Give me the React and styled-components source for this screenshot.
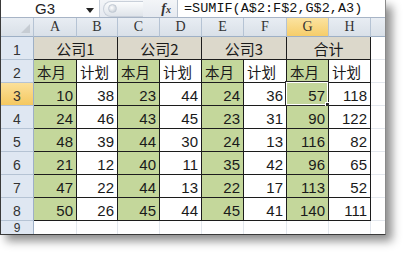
import React from "react";
import styled, { createGlobalStyle } from "styled-components";

const GlobalStyle = createGlobalStyle`
  html, body {
    margin: 0;
    padding: 0;
    background: #ffffff;
  }
`;

const Page = styled.div`
  width: 407px;
  height: 257px;
  overflow: hidden;
`;

const Window = styled.div`
  width: 384px;
  height: 234px;
  overflow: hidden;
  background: #ffffff;
  border-left: 1px solid #3a3a3a;
  border-right: 1px solid #8a8a8a;
  border-bottom: 1px solid #3a3a3a;
  box-shadow: 6px 6px 9px rgba(0, 0, 0, 0.45);
  display: flex;
  flex-direction: column;
`;

const FormulaBar = styled.div`
  display: flex;
  align-items: stretch;
  height: 21px;
  border-bottom: 1px solid #a7b4c6;
  background: linear-gradient(#f3f5f8, #e6eaf0);
`;

const NameBox = styled.div`
  width: 99px;
  position: relative;
  background: #ffffff;
  border-right: 1px solid #c5cdd8;
  font-family: "Liberation Sans", Arial, sans-serif;
  font-size: 15px;
  color: #222;
  display: flex;
  align-items: center;
  padding-left: 34px;
  box-sizing: border-box;
`;

const DropArrow = styled.span`
  position: absolute;
  right: 5px;
  top: 8px;
  width: 0;
  height: 0;
  border-left: 4px solid transparent;
  border-right: 4px solid transparent;
  border-top: 5px solid #222;
`;

const Tools = styled.div`
  width: 78px;
  display: flex;
  align-items: center;
  justify-content: space-between;
  padding: 0 6px 0 3px;
  box-sizing: border-box;
  border-right: 1px solid #b9c3d0;
`;

const Pill = styled.div`
  width: 40px;
  height: 16px;
  border-radius: 9px 0 0 9px;
  border: 1px solid #c9d0da;
  border-right: none;
  background: linear-gradient(#fbfcfd, #dfe4ea);
  display: flex;
  align-items: center;
  padding-left: 4px;
  box-sizing: border-box;
`;

const Dot = styled.div`
  width: 7px;
  height: 7px;
  border-radius: 50%;
  background: radial-gradient(circle at 40% 40%, #ffffff, #b8c1cc);
  border: 1px solid #c2cad4;
`;

const Fx = styled.span`
  font-family: "Liberation Serif", "Times New Roman", serif;
  font-style: italic;
  font-weight: bold;
  font-size: 14px;
  color: #333;
  sub {
    font-size: 10px;
    vertical-align: baseline;
  }
`;

const FormulaText = styled.div`
  flex: 1;
  background: #ffffff;
  font-family: "Liberation Mono", "Courier New", monospace;
  font-size: 13.5px;
  color: #111;
  display: flex;
  align-items: center;
  padding-left: 6px;
  white-space: nowrap;
`;

const Sheet = styled.table`
  border-collapse: separate;
  border-spacing: 0;
  table-layout: fixed;
  width: 385px;
`;

const ColHead = styled.th`
  height: 18px;
  padding: 0;
  font-weight: normal;
  font-family: "Liberation Serif", "Times New Roman", serif;
  font-size: 14px;
  color: #333;
  text-align: center;
  border-right: 1px solid #b5c3d4;
  border-bottom: 1px solid #9eb0c6;
  background: ${({ $active }) =>
    $active
      ? "linear-gradient(#fbe3a0, #f6cd6a)"
      : "linear-gradient(#e8edf3, #d9e0e8)"};
`;

const Corner = styled(ColHead)`
  position: relative;
  &::after {
    content: "";
    position: absolute;
    right: 3px;
    bottom: 3px;
    width: 0;
    height: 0;
    border-left: 9px solid transparent;
    border-bottom: 9px solid #c6ccd3;
  }
`;

const RowHead = styled.th`
  height: ${({ $short }) => ($short ? "13px" : "21px")};
  padding: ${({ $short }) => ($short ? "1px 0 0" : "0 0 1px")};
  font-weight: normal;
  font-family: "Liberation Sans", Arial, sans-serif;
  font-size: ${({ $short }) => ($short ? "12px" : "14px")};
  line-height: ${({ $short }) => ($short ? "12px" : "normal")};
  color: #333;
  text-align: center;
  vertical-align: ${({ $short }) => ($short ? "top" : "bottom")};
  border-right: 1px solid #9eb0c6;
  border-bottom: 1px solid #b5c3d4;
  background: ${({ $active }) =>
    $active ? "linear-gradient(#fbe09a, #f5c860)" : "#dfe7f2"};
`;

const fills = {
  green: "#c4d79b",
  white: "#ffffff",
  tan: "#dcd8cb",
};

const Cell = styled.td`
  position: relative;
  padding: 0 3px 1px;
  height: ${({ $short }) => ($short ? "13px" : "21px")};
  vertical-align: bottom;
  white-space: nowrap;
  font-family: "Liberation Sans", Arial, "Noto Sans CJK SC", sans-serif;
  font-size: 15px;
  color: #1a1a1a;
  text-align: right;
  background: ${({ $fill }) => fills[$fill] || "#ffffff"};
  border-right: 1px solid ${({ $grid }) => ($grid ? "#e3e7ed" : "#1c1c1c")};
  border-bottom: 1px solid ${({ $grid }) => ($grid ? "#e3e7ed" : "#1c1c1c")};
`;

const TitleCell = styled(Cell)`
  text-align: center;
  font-family: "Noto Sans CJK SC", "Liberation Sans", sans-serif;
  font-size: 15px;
  vertical-align: middle;
  padding: 0;
`;

const LabelCell = styled(Cell)`
  text-align: left;
  font-family: "Noto Sans CJK SC", sans-serif;
  font-size: 14.5px;
  vertical-align: middle;
  padding: 0 0 0 3px;
`;

const Selection = styled.div`
  position: absolute;
  left: -2px;
  top: -2px;
  right: -1px;
  bottom: -1px;
  border: 1px solid #2a2a2a;
  box-shadow: inset 0 0 0 1px #ffffff;
  pointer-events: none;
`;

const Handle = styled.div`
  position: absolute;
  right: -4px;
  bottom: -4px;
  width: 5px;
  height: 5px;
  background: #2a2a2a;
  border: 1px solid #ffffff;
`;

const colWidths = [33, 43, 41, 42, 42, 42, 43, 42, 42, 15];
const letters = ["A", "B", "C", "D", "E", "F", "G", "H", ""];
const groups = ["公司1", "公司2", "公司3", "合计"];

const data = [
  [10, 38, 23, 44, 24, 36, 57, 118],
  [24, 46, 43, 45, 23, 31, 90, 122],
  [48, 39, 44, 30, 24, 13, 116, 82],
  [21, 12, 40, 11, 35, 42, 96, 65],
  [47, 22, 44, 13, 22, 17, 113, 52],
  [50, 26, 45, 44, 45, 41, 140, 111],
];

export default function App() {
  return (
    <Page>
      <GlobalStyle />
      <Window>
        <FormulaBar>
          <NameBox>
            G3
            <DropArrow />
          </NameBox>
          <Tools>
            <Pill>
              <Dot />
            </Pill>
            <Fx>
              f<sub>x</sub>
            </Fx>
          </Tools>
          <FormulaText>=SUMIF(A$2:F$2,G$2,A3)</FormulaText>
        </FormulaBar>

        <Sheet>
          <colgroup>
            {colWidths.map((w, i) => (
              <col key={i} width={w} />
            ))}
          </colgroup>
          <thead>
            <tr>
              <Corner />
              {letters.map((l, i) => (
                <ColHead key={i} $active={l === "G"}>
                  {l}
                </ColHead>
              ))}
            </tr>
          </thead>
          <tbody>
            <tr>
              <RowHead>1</RowHead>
              {groups.map((g) => (
                <TitleCell key={g} colSpan={2} $fill="tan">
                  {g}
                </TitleCell>
              ))}
              <Cell $grid />
            </tr>
            <tr>
              <RowHead>2</RowHead>
              {groups.map((g) => (
                <React.Fragment key={g}>
                  <LabelCell $fill="green">本月</LabelCell>
                  <LabelCell $fill="white">计划</LabelCell>
                </React.Fragment>
              ))}
              <Cell $grid />
            </tr>
            {data.map((row, r) => (
              <tr key={r}>
                <RowHead $active={r === 0}>{r + 3}</RowHead>
                {row.map((v, c) => (
                  <Cell key={c} $fill={c % 2 === 0 ? "green" : "white"}>
                    {v}
                    {r === 0 && c === 6 && (
                      <Selection>
                        <Handle />
                      </Selection>
                    )}
                  </Cell>
                ))}
                <Cell $grid />
              </tr>
            ))}
            <tr>
              <RowHead $short>9</RowHead>
              {letters.map((l, i) => (
                <Cell key={i} $grid $short />
              ))}
            </tr>
          </tbody>
        </Sheet>
      </Window>
    </Page>
  );
}
